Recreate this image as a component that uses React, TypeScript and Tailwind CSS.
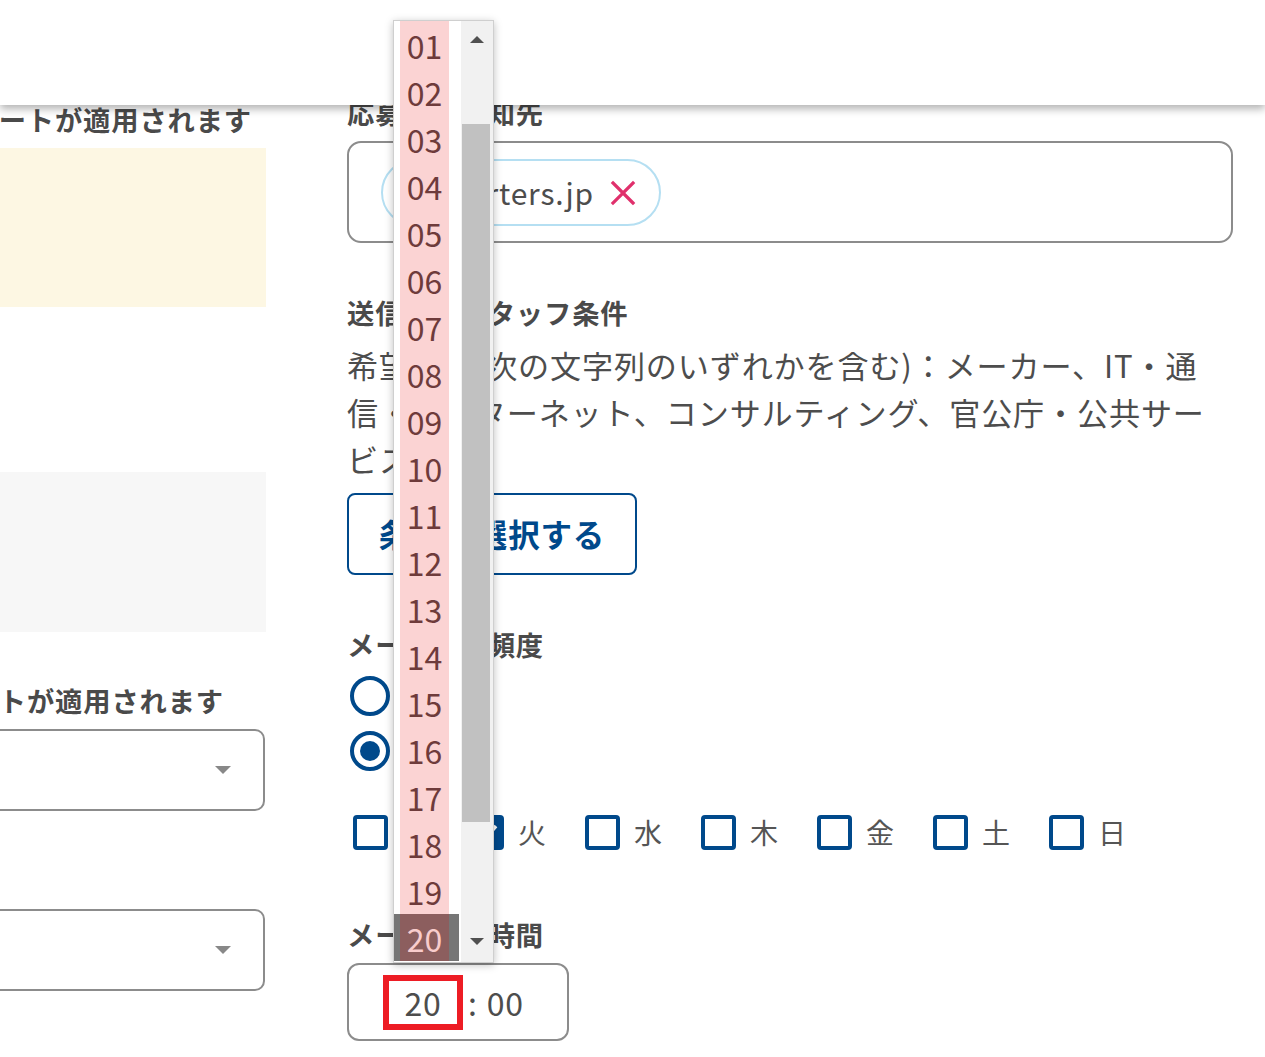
import React from "react";

const hours = Array.from({ length: 20 }, (_, i) => String(i + 1).padStart(2, "0"));
const days = ["月", "火", "水", "木", "金", "土", "日"];

function Label({ children }: { children: React.ReactNode }) {
  return (
    <div className="h-[36px] whitespace-nowrap text-[27.3px] font-bold leading-[32px] text-[#4a4a4a]">
      {children}
    </div>
  );
}

function SelectBox({ className }: { className: string }) {
  return (
    <div
      className={
        "ml-[-24px] flex h-[82px] w-[289px] items-center justify-end rounded-[10px] border-2 border-[#8c8c8c] bg-white pr-[32px] " +
        className
      }
    >
      <div className="h-0 w-0 border-x-[8px] border-t-[8px] border-x-transparent border-t-[#888888]" />
    </div>
  );
}

export default function App() {
  return (
    <div className="relative h-[1057px] w-[1265px] overflow-hidden bg-white font-['Noto_Sans_CJK_JP','Noto_Sans',sans-serif] tracking-[0.053em] text-[#4d4d4d]">
      {/* page content */}
      <div className="flex">
        {/* left column */}
        <div className="w-[266px] shrink-0 overflow-hidden">
          <div className="mt-[103px] flex justify-end pr-[14px]">
            <Label>テンプレートが適用されます</Label>
          </div>
          <div className="mt-[9px] h-[159px] bg-[#fdf7e3]" />
          <div className="mt-[165px] h-[160px] bg-[#f7f7f7]" />
          <div className="mt-[52px] flex justify-end pr-[42px]">
            <Label>デフォルトが適用されます</Label>
          </div>
          <SelectBox className="mt-[9px]" />
          <SelectBox className="mt-[98px]" />
        </div>

        {/* right column */}
        <div className="ml-[81px] w-[886px] shrink-0">
          <div className="mt-[96px]">
            <Label>応募受付通知先</Label>
          </div>
          <div className="mt-[9px] flex h-[102px] items-center rounded-[14px] border-2 border-[#8c8c8c] pl-[32px]">
            <div className="flex h-[67px] items-center gap-[16px] rounded-full border-2 border-[#b5dff2] pl-[18px] pr-[23px] text-[30px] text-[#4d4d4d]">
              <span>a@porters.jp</span>
              <svg width="26" height="26" viewBox="0 0 26 26" className="mt-[2px]">
                <path d="M3 3 L23 23 M23 3 L3 23" stroke="#e0306c" strokeWidth="3.2" strokeLinecap="square" />
              </svg>
            </div>
          </div>

          <div className="mt-[53px]">
            <Label>送信対象スタッフ条件</Label>
          </div>
          <p className="mt-[9px] w-[868px] text-[31.1px] leading-[47px] text-[#4d4d4d]">
            希望業種(次の文字列のいずれかを含む)：メーカー、IT・通信・インターネット、コンサルティング、官公庁・公共サービス
          </p>
          <div className="mt-[11px] flex h-[82px] w-[290px] items-center justify-center rounded-[8px] border-2 border-[#00498b] text-[31.5px] font-bold text-[#00498b]">
            条件を選択する
          </div>

          <div className="mt-[53px]">
            <Label>メール送信頻度</Label>
          </div>
          <div className="ml-[3px] mt-[12px] flex flex-col gap-[15px]">
            <div className="flex h-[40px] items-center gap-[16px]">
              <div className="h-[40px] w-[40px] rounded-full border-[4px] border-[#00498b]" />
              <span className="text-[30px]">毎日</span>
            </div>
            <div className="flex h-[40px] items-center gap-[16px]">
              <div className="flex h-[40px] w-[40px] items-center justify-center rounded-full border-[4px] border-[#00498b]">
                <div className="h-[20px] w-[20px] rounded-full bg-[#00498b]" />
              </div>
              <span className="text-[30px]">毎週</span>
            </div>
          </div>
          <div className="ml-[6px] mt-[44px] flex">
            {days.map((d, i) => (
              <div key={d} className="flex w-[116px] items-center gap-[14px]">
                {i === 1 ? (
                  <div className="flex h-[35px] w-[35px] items-center justify-center rounded-[4px] bg-[#00498b]">
                    <svg width="24" height="24" viewBox="0 0 24 24">
                      <path d="M4 12 L10 18 L21 5" stroke="#ffffff" strokeWidth="3.5" fill="none" />
                    </svg>
                  </div>
                ) : (
                  <div className="h-[35px] w-[35px] rounded-[4px] border-[4px] border-[#00498b]" />
                )}
                <span className="text-[28px] leading-[35px] text-[#555555]">{d}</span>
              </div>
            ))}
          </div>

          <div className="mt-[68px]">
            <Label>メール送信時間</Label>
          </div>
          <div className="mt-[9px] flex h-[78px] w-[222px] items-center rounded-[12px] border-2 border-[#8c8c8c] pl-[34px] text-[32px] text-[#4d4d4d]">
            <div className="flex h-[55px] w-[80px] items-center justify-center border-[6px] border-[#ed1c24]">
              20
            </div>
            <span className="ml-[5px]">:</span>
            <span className="ml-[9px]">00</span>
          </div>
        </div>
      </div>

      {/* fixed top bar */}
      <div className="absolute inset-x-0 top-0 z-10 h-[105px] bg-white shadow-[0_4px_8px_rgba(0,0,0,0.3)]" />

      {/* open select dropdown */}
      <div className="absolute left-[393px] top-[20px] z-20 flex h-[943px] w-[101px] border border-[#cfcfcf] bg-white shadow-[0_2px_8px_rgba(0,0,0,0.25)]">
        <div className="w-[67px]">
          {hours.map((h) => {
            const sel = h === "20";
            return (
              <div key={h} className={"h-[47px] w-[65px] pl-[6px] pr-[10px] " + (sel ? "bg-[#767676]" : "")}>
                <div
                  className={
                    "flex h-full w-[49px] items-center justify-center text-[32px] leading-none tracking-normal " +
                    (sel ? "bg-[#8c5e5e] text-[#f9cccc]" : "bg-[#fbd3d3] text-[#6e3b3b]")
                  }
                >
                  {h}
                </div>
              </div>
            );
          })}
        </div>
        <div className="flex w-[32px] flex-col bg-[#f1f1f1]">
          <div className="flex h-[36px] items-center justify-center">
            <div className="h-0 w-0 border-x-[7px] border-b-[7px] border-x-transparent border-b-[#505050]" />
          </div>
          <div className="ml-[1px] mt-[67px] h-[698px] w-[28px] bg-[#c1c1c1]" />
          <div className="mt-auto flex h-[42px] items-center justify-center">
            <div className="h-0 w-0 border-x-[7px] border-t-[7px] border-x-transparent border-t-[#505050]" />
          </div>
        </div>
      </div>
    </div>
  );
}
